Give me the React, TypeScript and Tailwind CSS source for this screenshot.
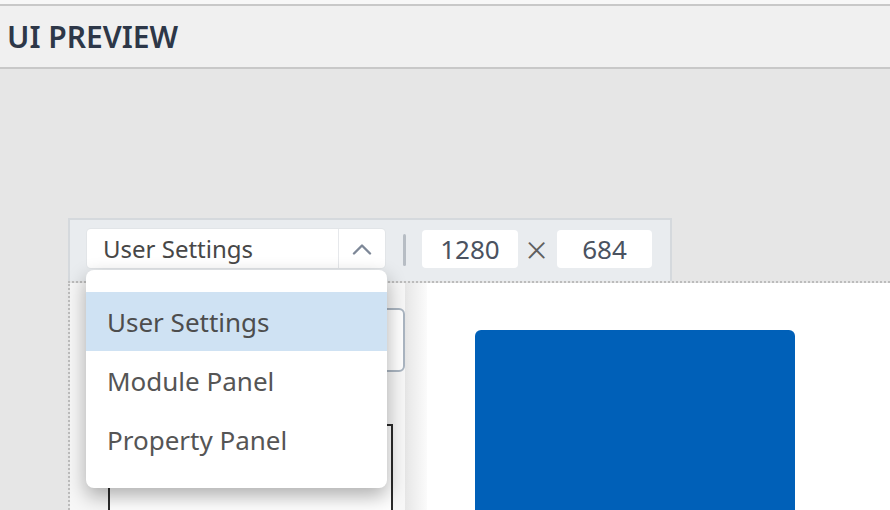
import React from "react";

export default function App() {
  return (
    <div className="w-[890px] h-[510px] overflow-hidden bg-[#e6e6e6] font-['Noto_Sans',sans-serif] flex flex-col">
      <div className="h-[4px] shrink-0 bg-[#f7f7f7]" />
      <div className="h-[65px] shrink-0 bg-[#f0f0f0] border-y-2 border-[#c8c8c8] flex items-center pl-[7px]">
        <span className="text-[30px] leading-none font-semibold text-[#2d3748]">UI PREVIEW</span>
      </div>
      <div className="flex-1 min-h-0 pt-[149px] pl-[68px] flex flex-col">
        {/* toolbar */}
        <div className="w-[604px] h-[63px] shrink-0 bg-[#e9ecef] border-t-2 border-x-2 border-[#d5d9dd] flex items-start pt-[9px] pl-[17px]">
          <div className="relative w-[298px] h-[39px] bg-white rounded-[4px] flex shadow-[0_0_0_1px_#e2e5e8]">
            <div className="flex-1 flex items-center pl-[16px] text-[24px] text-[#474747] leading-none">User Settings</div>
            <div className="w-[47px] border-l border-[#e6e8eb] flex items-center justify-center">
              <svg width="20" height="12" viewBox="0 0 20 12" fill="none">
                <polyline points="2,10.5 10,2.5 18,10.5" stroke="#7d8797" strokeWidth="2.4" strokeLinecap="round" strokeLinejoin="round" />
              </svg>
            </div>
            {/* dropdown */}
            <div className="absolute z-10 top-[41px] left-[-1px] w-[301px] h-[218px] bg-white rounded-[8px] shadow-[0_8px_20px_rgba(0,0,0,0.32)] pt-[22px]">
              <div className="h-[59px] bg-[#cfe2f3] flex items-center pl-[21px] text-[26px] text-[#4d4d4d] leading-none">User Settings</div>
              <div className="h-[59px] flex items-center pl-[21px] text-[26px] text-[#555] leading-none">Module Panel</div>
              <div className="h-[59px] flex items-center pl-[21px] text-[26px] text-[#555] leading-none">Property Panel</div>
            </div>
          </div>
          <div className="ml-[18px] mt-[5px] w-[3px] h-[32px] rounded-full bg-[#b7bdc4]" />
          <div className="ml-[16px] mt-[1px] w-[96px] h-[38px] bg-white rounded-[4px] flex items-center justify-center text-[26px] text-[#4a5260] leading-none">1280</div>
          <div className="ml-[8px] w-[21px] h-[39px] flex items-center justify-center text-[38px] font-light text-[#5f5f5f] leading-none">×</div>
          <div className="ml-[10px] mt-[1px] w-[95px] h-[38px] bg-white rounded-[4px] flex items-center justify-center text-[26px] text-[#4a5260] leading-none">684</div>
        </div>
        {/* canvas */}
        <div className="flex-1 min-h-0 flex border-t-2 border-l-2 border-dotted border-[#bcbcbc]">
          <div className="w-[357px] shrink-0 bg-[#f7f7f7] flex">
            <div className="flex-1 pl-[38px] pt-[25px]">
              <div className="w-[297px] h-[64px] rounded-[6px] border-2 border-[#aab5c1] bg-white" />
              <div className="mt-[52px] w-[285px] h-[100px] border-t-2 border-x-2 border-[#2b2b2b] bg-white" />
            </div>
            <div className="w-[22px] bg-gradient-to-r from-[#e6e6e6] to-[#fbfbfb]" />
          </div>
          <div className="flex-1 bg-white pl-[48px] pt-[47px]">
            <div className="w-[320px] h-[300px] bg-[#0060b8] rounded-[6px]" />
          </div>
        </div>
      </div>
    </div>
  );
}
